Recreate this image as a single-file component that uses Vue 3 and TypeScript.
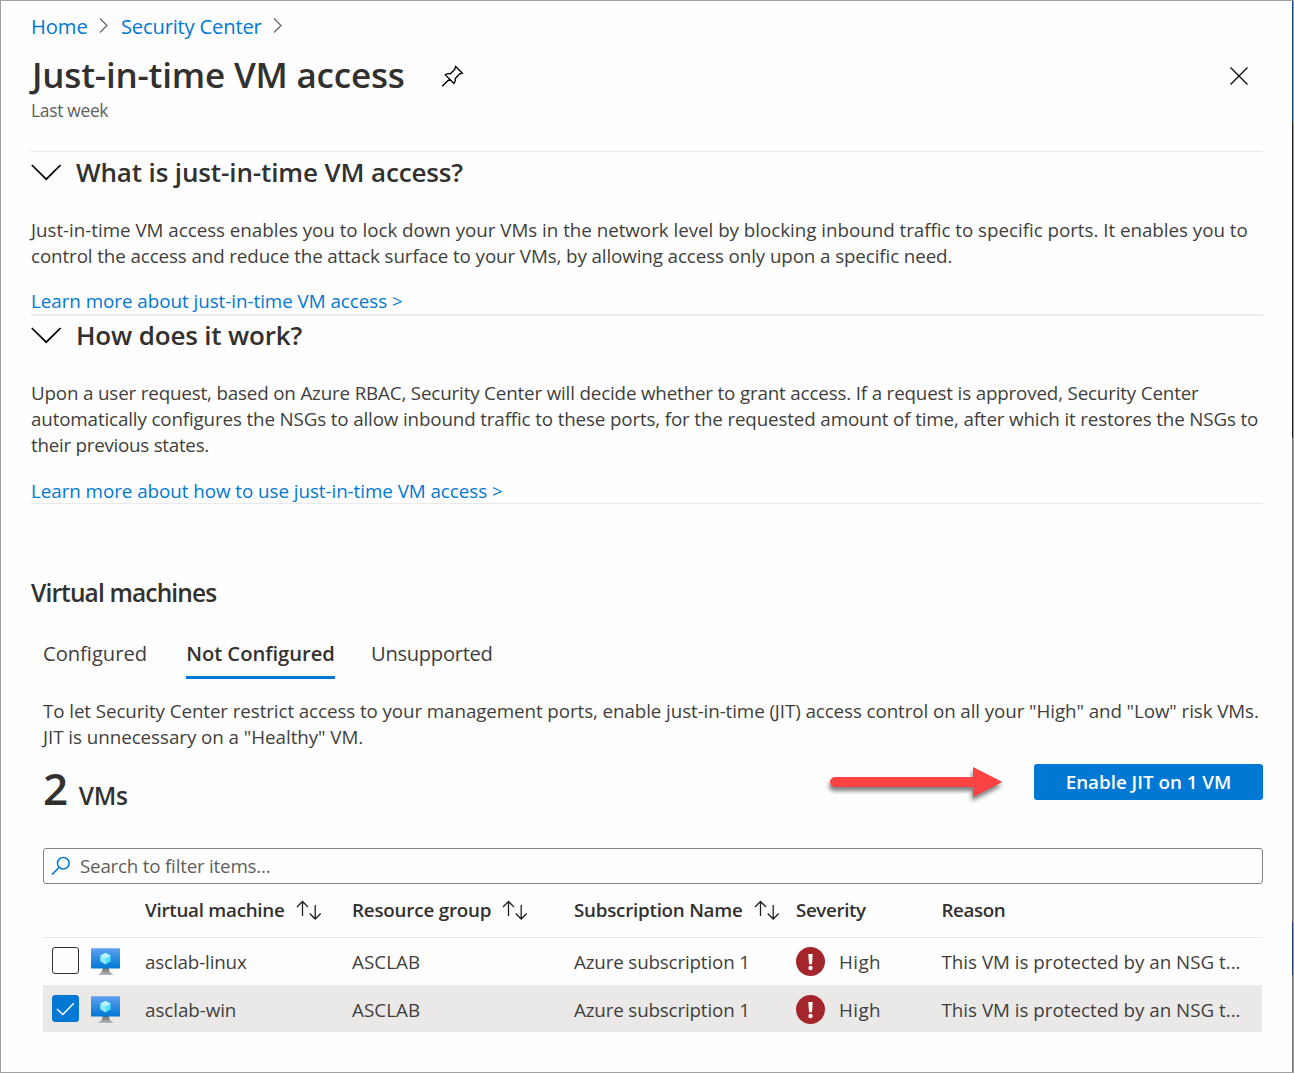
<script setup lang="ts">
import { ref } from 'vue'

interface Line { text: string; spacing: number }
interface Section { title: string; spacing: number; lines: Line[]; link: Line }
interface Column { key: string; label: string; spacing: number; sortable: boolean }
interface Machine { name: string; spacing: number; group: string; subscription: string; severity: string; reason: string; selected: boolean }

const sections: Section[] = [
  {
    title: 'What is just-in-time VM access?',
    spacing: -0.13,
    lines: [
      { text: 'Just-in-time VM access enables you to lock down your VMs in the network level by blocking inbound traffic to specific ports. It enables you to', spacing: -0.03 },
      { text: 'control the access and reduce the attack surface to your VMs, by allowing access only upon a specific need.', spacing: -0.11 },
    ],
    link: { text: 'Learn more about just-in-time VM access >', spacing: -0.03 },
  },
  {
    title: 'How does it work?',
    spacing: -0.17,
    lines: [
      { text: 'Upon a user request, based on Azure RBAC, Security Center will decide whether to grant access. If a request is approved, Security Center', spacing: -0.167 },
      { text: 'automatically configures the NSGs to allow inbound traffic to these ports, for the requested amount of time, after which it restores the NSGs to', spacing: -0.143 },
      { text: 'their previous states.', spacing: -0.26 },
    ],
    link: { text: 'Learn more about how to use just-in-time VM access >', spacing: -0.045 },
  },
]

const tabs = [
  { label: 'Configured', spacing: -0.04 },
  { label: 'Not Configured', spacing: -0.03 },
  { label: 'Unsupported', spacing: -0.32 },
]
const activeTab = ref('Not Configured')

const hint: Line[] = [
  { text: 'To let Security Center restrict access to your management ports, enable just-in-time (JIT) access control on all your "High" and "Low" risk VMs.', spacing: -0.091 },
  { text: 'JIT is unnecessary on a "Healthy" VM.', spacing: -0.05 },
]

const columns: Column[] = [
  { key: 'name', label: 'Virtual machine', spacing: -0.26, sortable: true },
  { key: 'group', label: 'Resource group', spacing: -0.2, sortable: true },
  { key: 'sub', label: 'Subscription Name', spacing: -0.25, sortable: true },
  { key: 'severity', label: 'Severity', spacing: -0.396, sortable: false },
  { key: 'reason', label: 'Reason', spacing: -0.4, sortable: false },
]

const machines = ref<Machine[]>([
  { name: 'asclab-linux', spacing: -0.147, group: 'ASCLAB', subscription: 'Azure subscription 1', severity: 'High', reason: 'This VM is protected by an NSG t...', selected: false },
  { name: 'asclab-win', spacing: -0.06, group: 'ASCLAB', subscription: 'Azure subscription 1', severity: 'High', reason: 'This VM is protected by an NSG t...', selected: true },
])

const ls = (n: number) => ({ letterSpacing: `${n}px` })
</script>

<template>
  <div class="frame">
    <main class="blade">
      <nav class="crumbs">
        <a class="home">Home</a>
        <svg width="10" height="18" viewBox="0 0 10 18"><path d="M1 1.5 8 8.5 1 15.5" /></svg>
        <a class="center">Security Center</a>
        <svg width="10" height="18" viewBox="0 0 10 18"><path d="M1 1.5 8 8.5 1 15.5" /></svg>
      </nav>

      <header class="title-row">
        <h1>Just-in-time VM access</h1>
        <svg class="pin" width="23" height="23" viewBox="0 0 23 23">
          <path d="M14.6 1.6 21.3 8.1 18.7 8.8 14.3 13.4C14.7 15.2 14.3 16.7 13 18.4L4.4 9.9C6 8.7 7.8 8.5 9.4 8.8L13.7 4.4Z M8.6 14 1.2 21.3" />
        </svg>
        <svg class="close" width="20" height="20" viewBox="0 0 20 20"><path d="M1.5 1.5 18.5 18.5M18.5 1.5 1.5 18.5" /></svg>
      </header>
      <p class="subtitle">Last week</p>

      <section v-for="s in sections" :key="s.title" class="info">
        <h2>
          <svg width="31" height="17" viewBox="0 0 31 17"><path d="M.8 1 15.2 15.2 29.6 1" /></svg>
          <span :style="ls(s.spacing)">{{ s.title }}</span>
        </h2>
        <div class="copy">
          <div v-for="l in s.lines" :key="l.text" :style="ls(l.spacing)">{{ l.text }}</div>
        </div>
        <a class="more" :style="ls(s.link.spacing)">{{ s.link.text }}</a>
      </section>

      <section class="machines">
        <h3>Virtual machines</h3>
        <div class="inner">
          <div class="tabs">
            <button v-for="t in tabs" :key="t.label" :class="{ active: t.label === activeTab }" :style="ls(t.spacing)" @click="activeTab = t.label">{{ t.label }}</button>
          </div>
          <div class="hint">
            <div v-for="l in hint" :key="l.text" :style="ls(l.spacing)">{{ l.text }}</div>
          </div>
          <div class="actions">
            <div class="count"><b>2</b><span>VMs</span></div>
            <svg class="arrow" width="184" height="48" viewBox="0 0 184 48">
              <path d="M13 19H151V9L180.500 24 151 39V29H13A5 5 0 0 1 13 19Z" />
            </svg>
            <button class="enable">Enable JIT on 1 VM</button>
          </div>
          <div class="search">
            <svg width="20" height="20" viewBox="0 0 20 20"><circle cx="12.300" cy="7.200" r="5.800" /><path d="M8.200 11.300 1 18.600" /></svg>
            <span>Search to filter items...</span>
          </div>

          <div class="row head">
            <div v-for="c in columns" :key="c.key" :class="c.key">
              <span :style="ls(c.spacing)">{{ c.label }}</span>
              <svg v-if="c.sortable" width="26" height="20" viewBox="0 0 26 20">
                <path d="M6.500 16V1.500M1 7 6.500 1.500 12 7M19.200 5V19M13.700 13.500 19.200 19 24.700 13.500" />
              </svg>
            </div>
          </div>
          <div v-for="m in machines" :key="m.name" class="row item" :class="{ selected: m.selected }">
            <div class="check" :class="{ on: m.selected }" @click="m.selected = !m.selected">
              <svg v-if="m.selected" width="19" height="14" viewBox="0 0 19 14"><path d="M1 7 6.800 12.500 17.800 1.300" /></svg>
            </div>
            <svg class="vm" width="29" height="28" viewBox="0 0 29 28">
              <defs>
                <linearGradient id="screen" x1="0" y1="0" x2="0" y2="1"><stop offset="0" stop-color="#5ea0ef" /><stop offset="1" stop-color="#0078d4" /></linearGradient>
                <linearGradient id="stand" x1="0" y1="0" x2="0" y2="1"><stop offset="0" stop-color="#707070" /><stop offset="1" stop-color="#b8b8b8" /></linearGradient>
              </defs>
              <path d="M11.500 20H18Q17.800 24.500 22 26.200V27H7.500V26.200Q11.700 24.500 11.500 20Z" fill="url(#stand)" />
              <rect width="29" height="20.300" y=".300" rx=".6" fill="url(#screen)" />
              <path d="M14.500 4.800 19.500 7.500V13.300L14.500 16.200 9.500 13.300V7.500Z" fill="#50e6ff" />
              <path d="M14.500 4.800 19.500 7.500 14.500 10.400 9.500 7.500Z" fill="#c3f1ff" />
              <path d="M9.500 7.500 14.500 10.400V16.200L9.500 13.300Z" fill="#9cebff" />
            </svg>
            <div class="name" :style="ls(m.spacing)">{{ m.name }}</div>
            <div class="group">{{ m.group }}</div>
            <div class="sub">{{ m.subscription }}</div>
            <div class="severity">
              <svg width="29" height="29" viewBox="0 0 29 29">
                <circle cx="14.500" cy="14.500" r="14.500" fill="#a4262c" />
                <path d="M12.300 7H16.700L16 17.300H13Z" fill="#fff" /><circle cx="14.500" cy="21" r="2.200" fill="#fff" />
              </svg>
              <span>{{ m.severity }}</span>
            </div>
            <div class="reason">{{ m.reason }}</div>
          </div>
        </div>
      </section>
    </main>
    <aside class="edge"></aside>
  </div>
</template>

<style>
body { margin: 0; }
</style>

<style scoped>
.frame {
  box-sizing: border-box;
  width: 1294px;
  height: 1073px;
  display: flex;
  overflow: hidden;
  background: #fefefe;
  border: 1px solid #a0a0a0;
  color: #403e3d;
  font: 18.8px/26px 'Open Sans', 'Noto Sans', sans-serif;
}
.blade { flex: 1; padding: 0 29px 0 30px; }
.edge {
  width: 1px;
  background: linear-gradient(#11497f 122px, #1d1d1d 122px 437px, #777 437px 921px, #1d3f70 921px 974px, #777 974px);
}
h1, h2, h3, p { margin: 0; font-weight: 600; color: #323130; }
svg { display: block; flex: none; fill: none; }
button { font: inherit; color: inherit; border: 0; background: none; padding: 0; white-space: nowrap; }
a { color: #0078d4; cursor: pointer; }

.crumbs { display: flex; align-items: center; height: 50px; font-size: 20.2px; white-space: nowrap; }
.crumbs svg { stroke: #605e5c; stroke-width: 1.1; }
.home { width: 68px; letter-spacing: -0.1px; }
.center { width: 152px; margin-left: 12px; letter-spacing: -0.2px; }

.title-row { display: flex; align-items: center; height: 49px; }
h1 { width: 409px; margin: -2px 0 0 1px; font-size: 35px; line-height: 48px; letter-spacing: -0.19px; white-space: nowrap; }
.pin { stroke: #000; stroke-width: 1.4; margin-top: 1px; }
.close { margin: 1px 14px 0 auto; stroke: #111; stroke-width: 1.4; }
.subtitle { height: 51px; line-height: 20px; font-size: 17.4px; font-weight: 400; letter-spacing: -0.3px; color: #605e5c; }

.info { width: 1232px; border-top: 1px solid #eaeaea; white-space: nowrap; }
.info h2 { display: flex; gap: 14px; height: 40px; line-height: 40px; font-size: 26px; }
.info h2 svg { stroke: #000; stroke-width: 1.7; margin-top: 12px; }
.copy { padding-top: 25px; }
.more { display: block; padding-top: 19px; height: 26px; }
.info + .info { border-top-width: 2px; border-bottom: 1px solid #eaeaea; }
.info + .info h2 { height: 39px; line-height: 38px; }
.info + .info h2 svg { margin-top: 11px; }
.info + .info .more { padding-top: 20px; height: 25px; }

.machines { width: 1232px; }
h3 { padding-top: 73px; height: 32px; line-height: 32px; font-size: 24.5px; letter-spacing: -0.86px; }
.inner { padding-left: 12px; }
.tabs { display: flex; gap: 36px; margin-top: 19px; height: 51px; font-size: 20.2px; }
.tabs button { height: 51px; line-height: 51px; }
.tabs button:nth-child(1) { width: 107px; text-align: left; }
.tabs button:nth-child(2) { width: 149px; }
.tabs .active { font-weight: 600; color: #323130; box-shadow: inset 0 -3px #0078d4; }
.hint { padding-top: 19px; white-space: nowrap; }
.actions { display: flex; align-items: flex-start; height: 98px; }
.count { display: flex; align-items: baseline; gap: 11px; width: 779px; height: 60px; line-height: 60px; padding-top: 8px; font-weight: 600; font-size: 24.5px; letter-spacing: -0.3px; color: #323130; }
.count b { font-size: 44px; font-weight: 600; }
.arrow { margin-top: 8px; filter: drop-shadow(-1px 4px 2px rgba(0, 0, 0, 0.5)); }
.arrow path { fill: #fb4343; }
.enable { width: 229px; height: 36px; margin: 14px 0 0 auto; border-radius: 3px; background: #0078d4; color: #fff; font-weight: 600; letter-spacing: 0; }
.search { box-sizing: border-box; display: flex; align-items: center; gap: 9px; height: 36px; padding: 0 0 1px 7px; border: 1px solid #868482; border-radius: 3px; color: #605e5c; letter-spacing: -0.22px; }
.search svg { stroke: #0078d4; stroke-width: 1.5; }

.row { display: grid; grid-template-columns: 39px 63px 207px 222px 222px 145.5px 1fr; align-items: center; white-space: nowrap; }
.head { box-sizing: border-box; height: 54px; padding-bottom: 2px; border-bottom: 1px solid #eaeaea; font-weight: 600; color: #323130; }
.head > div { display: flex; align-items: center; gap: 11px; }
.head svg { stroke: #201f1e; stroke-width: 1.3; }
.head .name { grid-column: 3; }
.item { height: 47px; border-bottom: 1px solid #eaeaea; }
.item.selected { box-sizing: border-box; height: 46px; margin-right: 1px; padding-top: 1px; background: #ebe9e8; border-bottom: 0; }
.check { box-sizing: border-box; width: 27px; height: 27px; margin: -2px 0 0 9px; border: 1.5px solid #323130; border-radius: 3px; display: grid; place-items: center; }
.check.on { background: #0078d4; border-color: #0078d4; }
.check svg { stroke: #fff; stroke-width: 1.5; }
.vm { margin-left: 9px; }
.group { letter-spacing: 0.063px; }
.item .sub { letter-spacing: -0.16px; }
.severity { display: flex; align-items: center; gap: 14px; }
.item .severity span { letter-spacing: 0.4px; }
.item .reason { letter-spacing: -0.01px; }
</style>
